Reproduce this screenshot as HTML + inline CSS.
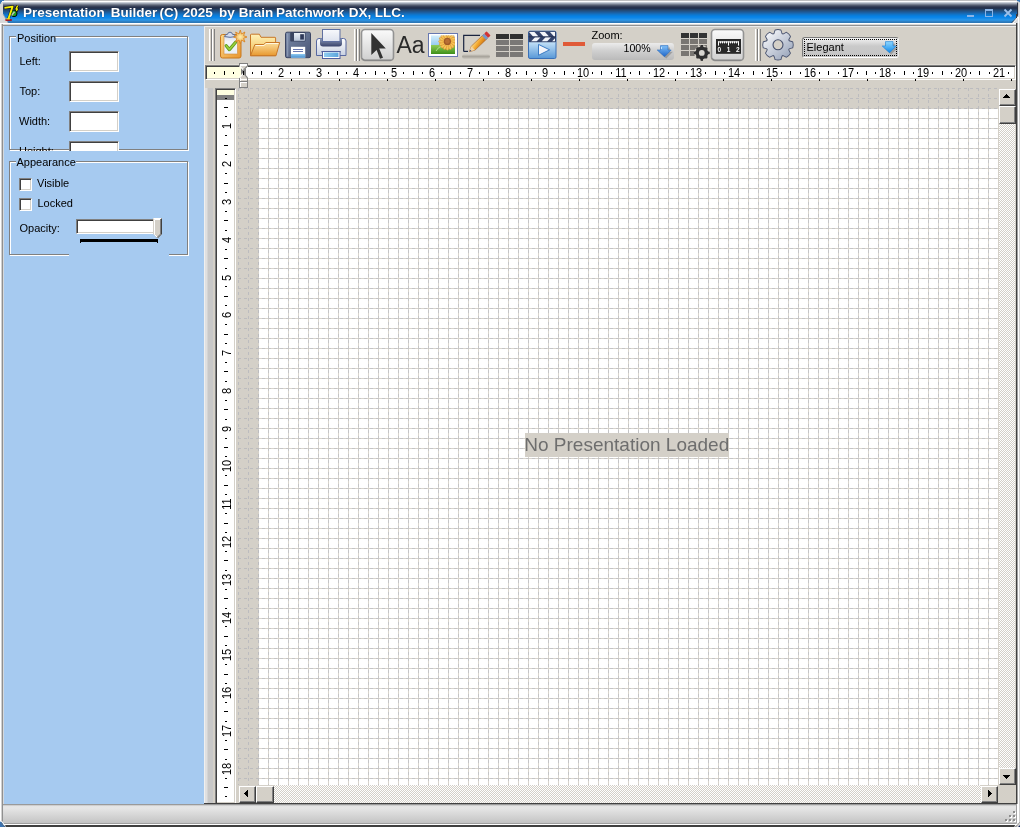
<!DOCTYPE html>
<html><head><meta charset="utf-8">
<style>
*{box-sizing:border-box}
html,body{margin:0;padding:0}
body{width:1020px;height:827px;overflow:hidden;position:relative;will-change:transform;background:#d4d0c8;font-family:"Liberation Sans",sans-serif;font-size:11px;color:#000}
.a{position:absolute}
#title{left:0;top:0;width:1020px;height:27px;background:linear-gradient(to bottom,#c0c0c0 0,#c0c0c0 1px,#fff 1px,#fff 2px,#e0e4e8 2px,#b0b8c4 3px,#8890a0 4px,#606878 5px,#404a60 6px,#2c3650 7px,#222e48 8px,#243858 9px,#244870 10px,#225080 11px,#1e5a98 12px,#1a64a8 13px,#1470c0 14px,#0c78d0 15px,#0880e0 16px,#0884e8 17px,#1088e8 18px,#2090e8 19px,#2898ec 20px,#3088d0 21px,#2c78b8 22px,#2c78b8 23px,#fff 23px,#fff 24px,#d8d8d8 24px,#d8d8d8 25px,#909090 25px,#909090 26px,#ececec 26px,#ececec 27px)}
.tw{position:absolute;top:4.6px;color:#fff;font-weight:bold;font-size:13.5px;white-space:nowrap;text-shadow:0 0 1px #102040}
#hrt i,#hmk i,#vrt i{position:absolute;background:#000;display:block}
.rn{position:absolute;top:66.1px;width:20px;text-align:center;font-size:12.5px;line-height:14px;transform:scaleX(.88)}
.vn{position:absolute;left:216.9px;width:20px;height:14px;margin-top:-7px;text-align:center;font-size:12.5px;line-height:14px;transform:rotate(-90deg) scaleX(.88)}
.lbl{position:absolute;font-size:11px;line-height:13px;white-space:nowrap}
.edit{position:absolute;width:50px;height:21px;background:#fff;border-style:solid;border-width:1px;border-color:#808080 #fff #fff #808080;box-shadow:inset 1px 1px 0 #404040,inset -1px -1px 0 #d4d0c8}
.gb{position:absolute;border:1px solid #808080;box-shadow:inset 1px 1px 0 #fff,1px 1px 0 #fff}
.chk{position:absolute;width:13px;height:13px;background:#fff;border-style:solid;border-width:1px;border-color:#808080 #fff #fff #808080;box-shadow:inset 1px 1px 0 #404040,inset -1px -1px 0 #d4d0c8}
.btn3d{position:absolute;background:#d4d0c8;border-style:solid;border-width:1px;border-color:#fff #404040 #404040 #fff;box-shadow:inset -1px -1px 0 #808080}
.track{position:absolute;background:#fff}

</style></head>
<body>
<div id="title" class="a"></div>
<span class="tw" style="left:23px">Presentation</span><span class="tw" style="left:110.7px">Builder</span><span class="tw" style="left:159.5px">(C)</span><span class="tw" style="left:182.8px">2025</span><span class="tw" style="left:219.1px">by</span><span class="tw" style="left:238.8px">Brain</span><span class="tw" style="left:276px">Patchwork</span><span class="tw" style="left:348.7px">DX,</span><span class="tw" style="left:374.7px">LLC.</span>

<!-- frames -->
<div class="a" style="left:0;top:24px;width:1px;height:803px;background:#fff"></div>
<div class="a" style="left:1px;top:24px;width:1px;height:803px;background:#d0d0d0"></div>
<div class="a" style="left:2px;top:24px;width:1px;height:803px;background:#909090"></div>
<div class="a" style="left:1016px;top:14px;width:1px;height:790px;background:#404040"></div>
<div class="a" style="left:1017px;top:14px;width:1px;height:790px;background:#a0a0a0"></div>
<div class="a" style="left:1016px;top:804px;width:1px;height:19px;background:#a0a0a0"></div>
<div class="a" style="left:1017px;top:804px;width:1px;height:19px;background:#fff"></div>
<div class="a" style="left:1018px;top:14px;width:1px;height:813px;background:#fff"></div>
<div class="a" style="left:1019px;top:14px;width:1px;height:813px;background:#d0d0d0"></div>

<!-- left blue panel -->
<div class="a" style="left:3px;top:26px;width:201px;height:778px;background:#a6caf0"></div>
<div class="a" style="left:204px;top:27px;width:1px;height:777px;background:#f0f0f0"></div>
<div class="a" style="left:3px;top:26px;width:1px;height:778px;background:#d4d8dc"></div>

<!-- toolbar bottom highlight -->
<div class="a" style="left:205px;top:64px;width:811px;height:1px;background:#e0dcd4"></div>

<!-- horizontal ruler -->
<div class="a" style="left:205px;top:65px;width:811px;height:15px;background:#fff;border-style:solid;border-width:1px;border-color:#808080 #fff #fff #808080;box-shadow:inset 1px 1px 0 #404040,inset -1px -1px 0 #d4d0c8"></div>
<div class="a" style="left:207px;top:67px;width:34px;height:11px;background:#ffffe1"></div>

<!-- left column beside vertical ruler -->
<div class="a" style="left:205px;top:88px;width:10px;height:715px;background:linear-gradient(to right,#e0e0e0 0,#e0e0e0 2px,#c8c8c8 3px,#c8c8c8 8px,#d4d0c8 8px)"></div>

<!-- vertical ruler -->
<div class="a" style="left:215px;top:88px;width:21px;height:716px;background:#fff;border-style:solid;border-width:1px;border-color:#808080 #fff #fff #808080;box-shadow:inset 1px 1px 0 #404040,inset -1px -1px 0 #d4d0c8"></div>
<div class="a" style="left:217px;top:90px;width:17px;height:5px;background:#ffffe1"></div>
<div class="a" style="left:217px;top:95px;width:17px;height:5px;background:#808080"></div>

<!-- grid viewport -->
<svg class="a" style="left:238px;top:88px" width="760" height="697" viewBox="0 0 760 697">
<defs>
<pattern id="gp" x="2" y="2" width="30" height="30" patternUnits="userSpaceOnUse">
<g fill="#d7d3cb">
<rect x="8" y="0" width="1" height="30"/><rect x="18" y="0" width="1" height="30"/><rect x="28" y="0" width="1" height="30"/>
<rect x="0" y="8" width="30" height="1"/><rect x="0" y="18" width="30" height="1"/><rect x="0" y="28" width="30" height="1"/>
</g>
<g fill="#c4c4c6">
<rect x="8" y="0" width="1" height="1"/><rect x="8" y="4" width="1" height="3"/><rect x="8" y="10" width="1" height="3"/><rect x="8" y="16" width="1" height="3"/><rect x="8" y="22" width="1" height="3"/><rect x="8" y="28" width="1" height="2"/>
<rect x="18" y="0" width="1" height="1"/><rect x="18" y="4" width="1" height="3"/><rect x="18" y="10" width="1" height="3"/><rect x="18" y="16" width="1" height="3"/><rect x="18" y="22" width="1" height="3"/><rect x="18" y="28" width="1" height="2"/>
<rect x="28" y="0" width="1" height="1"/><rect x="28" y="4" width="1" height="3"/><rect x="28" y="10" width="1" height="3"/><rect x="28" y="16" width="1" height="3"/><rect x="28" y="22" width="1" height="3"/><rect x="28" y="28" width="1" height="2"/>
<rect y="8" x="0" height="1" width="1"/><rect y="8" x="4" height="1" width="3"/><rect y="8" x="10" height="1" width="3"/><rect y="8" x="16" height="1" width="3"/><rect y="8" x="22" height="1" width="3"/><rect y="8" x="28" height="1" width="2"/>
<rect y="18" x="0" height="1" width="1"/><rect y="18" x="4" height="1" width="3"/><rect y="18" x="10" height="1" width="3"/><rect y="18" x="16" height="1" width="3"/><rect y="18" x="22" height="1" width="3"/><rect y="18" x="28" height="1" width="2"/>
<rect y="28" x="0" height="1" width="1"/><rect y="28" x="4" height="1" width="3"/><rect y="28" x="10" height="1" width="3"/><rect y="28" x="16" height="1" width="3"/><rect y="28" x="22" height="1" width="3"/><rect y="28" x="28" height="1" width="2"/>
</g>
</pattern>
<pattern id="gp2" x="2" y="2" width="30" height="30" patternUnits="userSpaceOnUse">
<g fill="#d4d0c8">
<rect x="8" y="0" width="1" height="30"/><rect x="18" y="0" width="1" height="30"/><rect x="28" y="0" width="1" height="30"/>
<rect x="0" y="8" width="30" height="1"/><rect x="0" y="18" width="30" height="1"/><rect x="0" y="28" width="30" height="1"/>
</g>
<g fill="#bcbcbf">
<rect x="8" y="0" width="1" height="1"/><rect x="8" y="4" width="1" height="3"/><rect x="8" y="10" width="1" height="3"/><rect x="8" y="16" width="1" height="3"/><rect x="8" y="22" width="1" height="3"/><rect x="8" y="28" width="1" height="2"/>
<rect x="18" y="0" width="1" height="1"/><rect x="18" y="4" width="1" height="3"/><rect x="18" y="10" width="1" height="3"/><rect x="18" y="16" width="1" height="3"/><rect x="18" y="22" width="1" height="3"/><rect x="18" y="28" width="1" height="2"/>
<rect x="28" y="0" width="1" height="1"/><rect x="28" y="4" width="1" height="3"/><rect x="28" y="10" width="1" height="3"/><rect x="28" y="16" width="1" height="3"/><rect x="28" y="22" width="1" height="3"/><rect x="28" y="28" width="1" height="2"/>
<rect y="8" x="0" height="1" width="1"/><rect y="8" x="4" height="1" width="3"/><rect y="8" x="10" height="1" width="3"/><rect y="8" x="16" height="1" width="3"/><rect y="8" x="22" height="1" width="3"/><rect y="8" x="28" height="1" width="2"/>
<rect y="18" x="0" height="1" width="1"/><rect y="18" x="4" height="1" width="3"/><rect y="18" x="10" height="1" width="3"/><rect y="18" x="16" height="1" width="3"/><rect y="18" x="22" height="1" width="3"/><rect y="18" x="28" height="1" width="2"/>
<rect y="28" x="0" height="1" width="1"/><rect y="28" x="4" height="1" width="3"/><rect y="28" x="10" height="1" width="3"/><rect y="28" x="16" height="1" width="3"/><rect y="28" x="22" height="1" width="3"/><rect y="28" x="28" height="1" width="2"/>
</g>
</pattern>
</defs>
<rect x="0" y="0" width="760" height="697" fill="#d4d0c8"/>
<rect x="0" y="0" width="760" height="697" fill="url(#gp2)"/>
<rect x="21" y="21" width="739" height="676" fill="#fff"/>
<rect x="21" y="21" width="739" height="676" fill="url(#gp)"/>
</svg>
<!-- ===== left panel content ===== -->
<div class="gb" style="left:9px;top:36px;width:179px;height:114px"></div>
<div class="a" style="left:16px;top:30px;width:39px;height:12px;background:#a6caf0"></div>
<div class="lbl" style="left:17px;top:31.7px">Position</div>
<div class="lbl" style="left:19.5px;top:54.5px">Left:</div>
<div class="edit" style="left:69px;top:51px"></div>
<div class="lbl" style="left:19.5px;top:84.5px">Top:</div>
<div class="edit" style="left:69px;top:81px"></div>
<div class="lbl" style="left:19px;top:114.5px">Width:</div>
<div class="edit" style="left:69px;top:111px"></div>
<div class="a" style="left:4px;top:130px;width:180px;height:21px;overflow:hidden">
  <div class="lbl" style="left:15px;top:14.5px">Height:</div>
  <div class="edit" style="left:65px;top:11px"></div>
</div>

<div class="gb" style="left:9px;top:161px;width:179px;height:94px"></div>
<div class="a" style="left:16px;top:155px;width:60px;height:12px;background:#a6caf0"></div>
<div class="lbl" style="left:16.5px;top:156px">Appearance</div>
<div class="chk" style="left:19px;top:178px"></div>
<div class="lbl" style="left:37px;top:176.8px">Visible</div>
<div class="chk" style="left:19px;top:198px"></div>
<div class="lbl" style="left:37.5px;top:197px">Locked</div>
<div class="lbl" style="left:19.5px;top:221.5px">Opacity:</div>
<div class="a" style="left:76px;top:219px;width:85px;height:15px;background:#fff;border-style:solid;border-width:1px;border-color:#808080 #fff #fff #808080;box-shadow:inset 1px 1px 0 #404040,inset -1px -1px 0 #d4d0c8"></div>
<svg class="a" style="left:153px;top:218px" width="9" height="20" viewBox="0 0 9 20">
<path d="M0 0H9V16L5 20H4L0 16Z" fill="#d4d0c8"/>
<path d="M0 0H8V1H1V16L4.5 19.5" fill="none" stroke="#fff" stroke-width="1" transform="translate(0.5 0.5)"/>
<path d="M8.5 0.5V16L4.5 20" fill="none" stroke="#404040" stroke-width="1"/>
<path d="M7.5 1V16L4 19.5" fill="none" stroke="#808080" stroke-width="1"/>
</svg>
<div class="a" style="left:80px;top:239px;width:78px;height:3px;background:#000"></div>
<div class="a" style="left:80px;top:242px;width:1px;height:1px;background:#000"></div>
<div class="a" style="left:157px;top:242px;width:1px;height:1px;background:#000"></div>
<div class="a" style="left:69px;top:253px;width:100px;height:3px;background:#a6caf0"></div>
<div id="hrt"><i style="left:214px;top:72px;width:1px;height:2px"></i><i style="left:224px;top:71px;width:1px;height:4px"></i><i style="left:233px;top:72px;width:1px;height:2px"></i><span class="rn" style="left:233.1px">1</span><i style="left:252px;top:72px;width:1px;height:2px"></i><i style="left:261px;top:71px;width:1px;height:4px"></i><i style="left:271px;top:72px;width:1px;height:2px"></i><span class="rn" style="left:270.9px">2</span><i style="left:290px;top:72px;width:1px;height:2px"></i><i style="left:299px;top:71px;width:1px;height:4px"></i><i style="left:309px;top:72px;width:1px;height:2px"></i><span class="rn" style="left:308.6px">3</span><i style="left:328px;top:72px;width:1px;height:2px"></i><i style="left:337px;top:71px;width:1px;height:4px"></i><i style="left:346px;top:72px;width:1px;height:2px"></i><span class="rn" style="left:346.4px">4</span><i style="left:365px;top:72px;width:1px;height:2px"></i><i style="left:375px;top:71px;width:1px;height:4px"></i><i style="left:384px;top:72px;width:1px;height:2px"></i><span class="rn" style="left:384.2px">5</span><i style="left:403px;top:72px;width:1px;height:2px"></i><i style="left:413px;top:71px;width:1px;height:4px"></i><i style="left:422px;top:72px;width:1px;height:2px"></i><span class="rn" style="left:422.0px">6</span><i style="left:441px;top:72px;width:1px;height:2px"></i><i style="left:450px;top:71px;width:1px;height:4px"></i><i style="left:460px;top:72px;width:1px;height:2px"></i><span class="rn" style="left:459.8px">7</span><i style="left:479px;top:72px;width:1px;height:2px"></i><i style="left:488px;top:71px;width:1px;height:4px"></i><i style="left:498px;top:72px;width:1px;height:2px"></i><span class="rn" style="left:497.5px">8</span><i style="left:516px;top:72px;width:1px;height:2px"></i><i style="left:526px;top:71px;width:1px;height:4px"></i><i style="left:535px;top:72px;width:1px;height:2px"></i><span class="rn" style="left:535.3px">9</span><i style="left:554px;top:72px;width:1px;height:2px"></i><i style="left:564px;top:71px;width:1px;height:4px"></i><i style="left:573px;top:72px;width:1px;height:2px"></i><span class="rn" style="left:573.1px">10</span><i style="left:592px;top:72px;width:1px;height:2px"></i><i style="left:601px;top:71px;width:1px;height:4px"></i><i style="left:611px;top:72px;width:1px;height:2px"></i><span class="rn" style="left:610.9px">11</span><i style="left:630px;top:72px;width:1px;height:2px"></i><i style="left:639px;top:71px;width:1px;height:4px"></i><i style="left:649px;top:72px;width:1px;height:2px"></i><span class="rn" style="left:648.7px">12</span><i style="left:668px;top:72px;width:1px;height:2px"></i><i style="left:677px;top:71px;width:1px;height:4px"></i><i style="left:686px;top:72px;width:1px;height:2px"></i><span class="rn" style="left:686.4px">13</span><i style="left:705px;top:72px;width:1px;height:2px"></i><i style="left:715px;top:71px;width:1px;height:4px"></i><i style="left:724px;top:72px;width:1px;height:2px"></i><span class="rn" style="left:724.2px">14</span><i style="left:743px;top:72px;width:1px;height:2px"></i><i style="left:753px;top:71px;width:1px;height:4px"></i><i style="left:762px;top:72px;width:1px;height:2px"></i><span class="rn" style="left:762.0px">15</span><i style="left:781px;top:72px;width:1px;height:2px"></i><i style="left:790px;top:71px;width:1px;height:4px"></i><i style="left:800px;top:72px;width:1px;height:2px"></i><span class="rn" style="left:799.8px">16</span><i style="left:819px;top:72px;width:1px;height:2px"></i><i style="left:828px;top:71px;width:1px;height:4px"></i><i style="left:838px;top:72px;width:1px;height:2px"></i><span class="rn" style="left:837.6px">17</span><i style="left:857px;top:72px;width:1px;height:2px"></i><i style="left:866px;top:71px;width:1px;height:4px"></i><i style="left:875px;top:72px;width:1px;height:2px"></i><span class="rn" style="left:875.3px">18</span><i style="left:894px;top:72px;width:1px;height:2px"></i><i style="left:904px;top:71px;width:1px;height:4px"></i><i style="left:913px;top:72px;width:1px;height:2px"></i><span class="rn" style="left:913.1px">19</span><i style="left:932px;top:72px;width:1px;height:2px"></i><i style="left:942px;top:71px;width:1px;height:4px"></i><i style="left:951px;top:72px;width:1px;height:2px"></i><span class="rn" style="left:950.9px">20</span><i style="left:970px;top:72px;width:1px;height:2px"></i><i style="left:979px;top:71px;width:1px;height:4px"></i><i style="left:989px;top:72px;width:1px;height:2px"></i><span class="rn" style="left:988.7px">21</span><i style="left:1008px;top:72px;width:1px;height:2px"></i></div>
<div id="hmk"><i style="left:291px;top:79px;width:1px;height:2px"></i><i style="left:339px;top:79px;width:1px;height:2px"></i><i style="left:387px;top:79px;width:1px;height:2px"></i><i style="left:435px;top:79px;width:1px;height:2px"></i><i style="left:483px;top:79px;width:1px;height:2px"></i><i style="left:531px;top:79px;width:1px;height:2px"></i><i style="left:579px;top:79px;width:1px;height:2px"></i><i style="left:627px;top:79px;width:1px;height:2px"></i><i style="left:675px;top:79px;width:1px;height:2px"></i><i style="left:723px;top:79px;width:1px;height:2px"></i><i style="left:771px;top:79px;width:1px;height:2px"></i><i style="left:819px;top:79px;width:1px;height:2px"></i><i style="left:867px;top:79px;width:1px;height:2px"></i><i style="left:915px;top:79px;width:1px;height:2px"></i><i style="left:963px;top:79px;width:1px;height:2px"></i><i style="left:1011px;top:79px;width:1px;height:2px"></i></div>
<div id="vrt"><i style="left:225px;top:98px;width:2px;height:1px"></i><i style="left:224px;top:107px;width:4px;height:1px"></i><i style="left:225px;top:116px;width:2px;height:1px"></i><span class="vn" style="top:126.4px">1</span><i style="left:225px;top:135px;width:2px;height:1px"></i><i style="left:224px;top:145px;width:4px;height:1px"></i><i style="left:225px;top:154px;width:2px;height:1px"></i><span class="vn" style="top:164.2px">2</span><i style="left:225px;top:173px;width:2px;height:1px"></i><i style="left:224px;top:183px;width:4px;height:1px"></i><i style="left:225px;top:192px;width:2px;height:1px"></i><span class="vn" style="top:201.9px">3</span><i style="left:225px;top:211px;width:2px;height:1px"></i><i style="left:224px;top:220px;width:4px;height:1px"></i><i style="left:225px;top:230px;width:2px;height:1px"></i><span class="vn" style="top:239.7px">4</span><i style="left:225px;top:249px;width:2px;height:1px"></i><i style="left:224px;top:258px;width:4px;height:1px"></i><i style="left:225px;top:268px;width:2px;height:1px"></i><span class="vn" style="top:277.5px">5</span><i style="left:225px;top:286px;width:2px;height:1px"></i><i style="left:224px;top:296px;width:4px;height:1px"></i><i style="left:225px;top:305px;width:2px;height:1px"></i><span class="vn" style="top:315.3px">6</span><i style="left:225px;top:324px;width:2px;height:1px"></i><i style="left:224px;top:334px;width:4px;height:1px"></i><i style="left:225px;top:343px;width:2px;height:1px"></i><span class="vn" style="top:353.1px">7</span><i style="left:225px;top:362px;width:2px;height:1px"></i><i style="left:224px;top:371px;width:4px;height:1px"></i><i style="left:225px;top:381px;width:2px;height:1px"></i><span class="vn" style="top:390.8px">8</span><i style="left:225px;top:400px;width:2px;height:1px"></i><i style="left:224px;top:409px;width:4px;height:1px"></i><i style="left:225px;top:419px;width:2px;height:1px"></i><span class="vn" style="top:428.6px">9</span><i style="left:225px;top:438px;width:2px;height:1px"></i><i style="left:224px;top:447px;width:4px;height:1px"></i><i style="left:225px;top:456px;width:2px;height:1px"></i><span class="vn" style="top:466.4px">10</span><i style="left:225px;top:475px;width:2px;height:1px"></i><i style="left:224px;top:485px;width:4px;height:1px"></i><i style="left:225px;top:494px;width:2px;height:1px"></i><span class="vn" style="top:504.2px">11</span><i style="left:225px;top:513px;width:2px;height:1px"></i><i style="left:224px;top:523px;width:4px;height:1px"></i><i style="left:225px;top:532px;width:2px;height:1px"></i><span class="vn" style="top:542.0px">12</span><i style="left:225px;top:551px;width:2px;height:1px"></i><i style="left:224px;top:560px;width:4px;height:1px"></i><i style="left:225px;top:570px;width:2px;height:1px"></i><span class="vn" style="top:579.7px">13</span><i style="left:225px;top:589px;width:2px;height:1px"></i><i style="left:224px;top:598px;width:4px;height:1px"></i><i style="left:225px;top:608px;width:2px;height:1px"></i><span class="vn" style="top:617.5px">14</span><i style="left:225px;top:626px;width:2px;height:1px"></i><i style="left:224px;top:636px;width:4px;height:1px"></i><i style="left:225px;top:645px;width:2px;height:1px"></i><span class="vn" style="top:655.3px">15</span><i style="left:225px;top:664px;width:2px;height:1px"></i><i style="left:224px;top:674px;width:4px;height:1px"></i><i style="left:225px;top:683px;width:2px;height:1px"></i><span class="vn" style="top:693.1px">16</span><i style="left:225px;top:702px;width:2px;height:1px"></i><i style="left:224px;top:711px;width:4px;height:1px"></i><i style="left:225px;top:721px;width:2px;height:1px"></i><span class="vn" style="top:730.9px">17</span><i style="left:225px;top:740px;width:2px;height:1px"></i><i style="left:224px;top:749px;width:4px;height:1px"></i><i style="left:225px;top:759px;width:2px;height:1px"></i><span class="vn" style="top:768.6px">18</span><i style="left:225px;top:778px;width:2px;height:1px"></i><i style="left:224px;top:787px;width:4px;height:1px"></i><i style="left:225px;top:796px;width:2px;height:1px"></i></div>
<svg width="0" height="0" style="position:absolute"><defs><pattern id="ckp" x="0" y="0" width="2" height="2" patternUnits="userSpaceOnUse"><rect width="2" height="2" fill="#fff"/><rect x="0" y="0" width="1" height="1" fill="#d4d0c8"/><rect x="1" y="1" width="1" height="1" fill="#d4d0c8"/></pattern></defs></svg>
<!-- vertical scrollbar -->
<div class="btn3d" style="left:999px;top:89px;width:17px;height:17px"></div>
<svg class="a" style="left:1003px;top:94px" width="7" height="4"><path d="M3 0h1v1h1v1h1v1h1v1H0V3h1V2h1V1h1z" fill="#000"/></svg>
<div class="btn3d" style="left:999px;top:106px;width:17px;height:18px"></div>
<svg class="a" style="left:999px;top:124px" width="16" height="644"><rect width="16" height="644" fill="url(#ckp)"/></svg>
<div class="btn3d" style="left:999px;top:768px;width:17px;height:17px"></div>
<svg class="a" style="left:1003px;top:775px" width="7" height="4"><path d="M0 0h7v1H6v1H5v1H4v1H3V3H2V2H1V1H0z" fill="#000"/></svg>
<!-- horizontal scrollbar -->
<div class="btn3d" style="left:239px;top:786px;width:17px;height:17px"></div>
<svg class="a" style="left:244px;top:790px" width="4" height="7"><path d="M3 0h1v7H3V6H2V5H1V4H0V3h1V2h1V1h1z" fill="#000"/></svg>
<div class="btn3d" style="left:256px;top:786px;width:18px;height:17px"></div>
<svg class="a" style="left:274px;top:785px" width="707" height="18"><rect width="707" height="18" fill="url(#ckp)"/></svg>
<div class="btn3d" style="left:981px;top:786px;width:17px;height:17px"></div>
<svg class="a" style="left:988px;top:790px" width="4" height="7"><path d="M0 0h1v1h1v1h1v1h1v1H3v1H2v1H1v1H0z" fill="#000"/></svg>
<div class="a" style="left:998px;top:785px;width:18px;height:18px;background:#d4d0c8"></div>

<!-- status bar -->
<div class="a" style="left:204px;top:803px;width:812px;height:1px;background:#404040"></div>
<div class="a" style="left:3px;top:804px;width:1013px;height:19px;background:linear-gradient(#9a9a9a 0,#9a9a9a 1px,#cfcfcf 1px,#cfcfcf 2px,#e4e4e4 2px,#e6e6e6 4px,#c4c4c4 19px)"></div>
<div class="a" style="left:0;top:823px;width:1020px;height:1px;background:#a0a0a0"></div>
<div class="a" style="left:0;top:824px;width:1020px;height:1px;background:#fff"></div>
<div class="a" style="left:0;top:825px;width:1020px;height:2px;background:#404040"></div>

<!-- no presentation label -->
<div class="a" style="left:525px;top:433px;width:204px;height:24px;background:#d4d0c8"></div>
<div class="a" style="left:524.3px;top:434.2px;font-size:19px;line-height:22px;color:#6e6e6e;white-space:nowrap">No Presentation Loaded</div>
<!-- ===== toolbar ===== -->
<!-- grips -->
<div class="a" style="left:209px;top:29px;width:1px;height:32px;background:#fff"></div>
<div class="a" style="left:211px;top:29px;width:1px;height:32px;background:#808080"></div>
<div class="a" style="left:212px;top:29px;width:1px;height:32px;background:#fff"></div>
<div class="a" style="left:214px;top:29px;width:1px;height:32px;background:#808080"></div>
<div class="a" style="left:354px;top:29px;width:1px;height:32px;background:#fff"></div>
<div class="a" style="left:356px;top:29px;width:1px;height:32px;background:#808080"></div>
<div class="a" style="left:357px;top:29px;width:1px;height:32px;background:#fff"></div>
<div class="a" style="left:359px;top:29px;width:1px;height:32px;background:#808080"></div>
<div class="a" style="left:755px;top:29px;width:1px;height:32px;background:#fff"></div>
<div class="a" style="left:757px;top:29px;width:1px;height:32px;background:#808080"></div>
<div class="a" style="left:758px;top:29px;width:1px;height:32px;background:#fff"></div>
<div class="a" style="left:760px;top:29px;width:1px;height:32px;background:#808080"></div>

<!-- new presentation icon -->
<svg class="a" style="left:216px;top:26px" width="34" height="34" viewBox="0 0 34 34">
<defs>
<linearGradient id="gOr" x1="0" y1="0" x2="1" y2="1"><stop offset="0" stop-color="#fcd88a"/><stop offset="1" stop-color="#e8952e"/></linearGradient>
<linearGradient id="gPap" x1="0" y1="0" x2="0" y2="1"><stop offset="0" stop-color="#d8e0ec"/><stop offset="0.3" stop-color="#f4f6fa"/><stop offset="1" stop-color="#e8eef6"/></linearGradient>
<radialGradient id="gStar" cx="0.5" cy="0.5" r="0.5"><stop offset="0" stop-color="#fff0b0"/><stop offset="1" stop-color="#eaa040"/></radialGradient>
</defs>
<rect x="4.5" y="8.5" width="20.5" height="23.5" rx="2" fill="url(#gOr)" stroke="#c8781e" stroke-width="1"/>
<rect x="8" y="10.5" width="13.5" height="17.5" fill="url(#gPap)" stroke="#d08a3a" stroke-width="0.6"/>
<path d="M8.6 10.6 Q8.6 8.4 11.6 8.2 Q11.8 6.2 14 6.2 Q16.2 6.2 16.4 8.2 Q19.4 8.4 19.4 10.6 Q14 12 8.6 10.6Z" fill="#d4dcec" stroke="#5a6e9a" stroke-width="1"/>
<path d="M10.2 19.8 L13.4 23.6 L19.6 16.2" fill="none" stroke="#5a9a18" stroke-width="3.2" stroke-linejoin="round" stroke-linecap="round"/>
<path d="M10.2 19.8 L13.4 23.6 L19.6 16.2" fill="none" stroke="#9ad040" stroke-width="1.6" stroke-linejoin="round" stroke-linecap="round"/>
<path d="M24.3 4 L25.5 8 L28.9 6 L27.6 9.6 L31 11 L27.6 12.3 L28.9 16 L25.5 14 L24.3 17.8 L23 14 L19.6 16 L20.9 12.3 L17.5 11 L20.9 9.6 L19.6 6 L23 8Z" fill="url(#gStar)" stroke="#d8821e" stroke-width="0.8"/>
</svg>

<!-- folder icon -->
<svg class="a" style="left:246px;top:28px" width="36" height="32" viewBox="0 0 36 32">
<defs>
<linearGradient id="gFb" x1="0" y1="0" x2="0" y2="1"><stop offset="0" stop-color="#fff2b8"/><stop offset="1" stop-color="#f0b850"/></linearGradient>
<linearGradient id="gFf" x1="0" y1="0" x2="0" y2="1"><stop offset="0" stop-color="#fbe0a0"/><stop offset="1" stop-color="#e8982e"/></linearGradient>
</defs>
<path d="M4.5 27.7 V7 Q4.5 6.2 5.3 6.2 H13.4 L15 9.3 H29 Q29.6 9.3 29.6 10 V27.7Z" fill="url(#gFb)" stroke="#c87828" stroke-width="1"/>
<path d="M4.5 27.7 L8.9 16.5 H17.8 L19.7 14.5 H33.7 L30 27.7Z" fill="url(#gFf)" stroke="#c87828" stroke-width="1" stroke-linejoin="round"/>
<path d="M9.6 17.5 H18.2 L20.1 15.5 H32.4" fill="none" stroke="#fff8e0" stroke-width="1"/>
</svg>
<!-- floppy -->
<svg class="a" style="left:282px;top:28px" width="32" height="32" viewBox="0 0 32 32">
<defs>
<linearGradient id="gFl" x1="0" y1="0" x2="1" y2="1"><stop offset="0" stop-color="#7a8aa8"/><stop offset="1" stop-color="#485474"/></linearGradient>
<linearGradient id="gSh" x1="0" y1="0" x2="0" y2="1"><stop offset="0" stop-color="#eef2f8"/><stop offset="1" stop-color="#b8c4d8"/></linearGradient>
<linearGradient id="gLb" x1="0" y1="0" x2="0" y2="1"><stop offset="0" stop-color="#8cc8f0"/><stop offset="1" stop-color="#4a90d0"/></linearGradient>
</defs>
<rect x="3.5" y="4.2" width="25" height="25.5" rx="1.5" fill="url(#gFl)" stroke="#3c4664" stroke-width="1"/>
<rect x="4.8" y="5.5" width="1.5" height="23" fill="#98a6c0" opacity="0.7"/>
<rect x="8.2" y="4" width="15.3" height="9.6" rx="1" fill="#3a4460"/>
<rect x="12" y="5" width="10.8" height="7.8" fill="url(#gSh)"/>
<rect x="18.2" y="6.2" width="3.7" height="5.4" fill="#2e3858"/>
<rect x="9" y="18.8" width="14.2" height="11" fill="#fff"/>
<rect x="9" y="26" width="14.2" height="3.8" fill="url(#gLb)"/>
<rect x="11" y="21" width="10" height="1" fill="#6878b0"/>
<rect x="11" y="23" width="10" height="1" fill="#6878b0"/>
</svg>

<!-- printer -->
<svg class="a" style="left:312px;top:26px" width="38" height="36" viewBox="0 0 38 36">
<defs>
<linearGradient id="gPb" x1="0" y1="0" x2="0" y2="1"><stop offset="0" stop-color="#ffffff"/><stop offset="1" stop-color="#c8d0e0"/></linearGradient>
<linearGradient id="gPd" x1="0" y1="0" x2="0" y2="1"><stop offset="0" stop-color="#8c9ab8"/><stop offset="1" stop-color="#38426a"/></linearGradient>
<linearGradient id="gPp" x1="0" y1="0" x2="0" y2="1"><stop offset="0" stop-color="#f8f9fc"/><stop offset="1" stop-color="#dde2ee"/></linearGradient>
<linearGradient id="gPt" x1="0" y1="0" x2="1" y2="0"><stop offset="0" stop-color="#90ccf0"/><stop offset="1" stop-color="#5aa4dc"/></linearGradient>
</defs>
<path d="M4.5 29.5 V15 Q4.5 12.5 7 12.5 H31.5 Q34 12.5 34 15 V29.5Z" fill="url(#gPb)" stroke="#5868a0" stroke-width="1"/>
<path d="M8 12.5 H30 V17.5 Q30 20.5 27 20.5 H11 Q8 20.5 8 17.5Z" fill="url(#gPd)"/>
<rect x="10.5" y="3.5" width="17.5" height="12" fill="url(#gPp)" stroke="#6070a0" stroke-width="1"/>
<rect x="9.5" y="25" width="19" height="1.4" fill="#3e4a78"/>
<rect x="10.5" y="25.5" width="17.5" height="7" fill="#fff" stroke="#5060a0" stroke-width="1"/>
<rect x="12" y="26.5" width="14.5" height="4.5" fill="url(#gPt)"/>
</svg>
<!-- arrow button (pressed) -->
<svg class="a" style="left:358px;top:26px" width="40" height="38" viewBox="0 0 40 38">
<defs>
<linearGradient id="gBt" x1="0" y1="0" x2="0" y2="1"><stop offset="0" stop-color="#fbfbfb"/><stop offset="1" stop-color="#cfcfcf"/></linearGradient>
</defs>
<rect x="3.5" y="3.5" width="32" height="31" rx="3.5" fill="url(#gBt)" stroke="#939393" stroke-width="1.6"/>
<path d="M4.6 32 Q4.6 34 7 34 H32.8" fill="none" stroke="#6e6e6e" stroke-width="0.8" opacity="0.7"/>
<path d="M13.3 7.1 V28.9 L18.6 23.9 L22 32.8 L25 31.7 L21.2 22.5 H27.8Z" fill="#333"/>
</svg>
<div class="a" style="left:396.5px;top:32px;font-size:23px;line-height:26px;color:#2a2a2a;white-space:nowrap">Aa</div>

<!-- image icon -->
<svg class="a" style="left:426px;top:30px" width="34" height="30" viewBox="0 0 34 30">
<defs>
<linearGradient id="gSky" x1="0" y1="0" x2="0" y2="1"><stop offset="0" stop-color="#d4eefc"/><stop offset="1" stop-color="#98ccf0"/></linearGradient>
<linearGradient id="gGr" x1="0" y1="0" x2="0" y2="1"><stop offset="0" stop-color="#90cc58"/><stop offset="1" stop-color="#3e9018"/></linearGradient>
<radialGradient id="gPet" cx="0.5" cy="0.5" r="0.5"><stop offset="0.35" stop-color="#f8c050"/><stop offset="1" stop-color="#f0a838"/></radialGradient>
</defs>
<rect x="2.5" y="3.5" width="29" height="23" fill="#fff" stroke="#6878b0" stroke-width="1"/>
<rect x="5" y="5.4" width="24" height="9.6" fill="url(#gSky)"/>
<rect x="5" y="15" width="24" height="9" fill="url(#gGr)"/>
<path d="M10 21 Q12 17 16 16" fill="none" stroke="#c0e8a0" stroke-width="0.8"/>
<clipPath id="cpic"><rect x="5" y="5.4" width="24" height="18.6"/></clipPath>
<g clip-path="url(#cpic)"><g transform="translate(21.4 11.4)">
<g fill="#f6c458" stroke="#d88a28" stroke-width="0.5"><ellipse cx="0" cy="-5.6" rx="1.5" ry="3.2" transform="rotate(0.0)"/><ellipse cx="0" cy="-5.6" rx="1.5" ry="3.2" transform="rotate(22.5)"/><ellipse cx="0" cy="-5.6" rx="1.5" ry="3.2" transform="rotate(45.0)"/><ellipse cx="0" cy="-5.6" rx="1.5" ry="3.2" transform="rotate(67.5)"/><ellipse cx="0" cy="-5.6" rx="1.5" ry="3.2" transform="rotate(90.0)"/><ellipse cx="0" cy="-5.6" rx="1.5" ry="3.2" transform="rotate(112.5)"/><ellipse cx="0" cy="-5.6" rx="1.5" ry="3.2" transform="rotate(135.0)"/><ellipse cx="0" cy="-5.6" rx="1.5" ry="3.2" transform="rotate(157.5)"/><ellipse cx="0" cy="-5.6" rx="1.5" ry="3.2" transform="rotate(180.0)"/><ellipse cx="0" cy="-5.6" rx="1.5" ry="3.2" transform="rotate(202.5)"/><ellipse cx="0" cy="-5.6" rx="1.5" ry="3.2" transform="rotate(225.0)"/><ellipse cx="0" cy="-5.6" rx="1.5" ry="3.2" transform="rotate(247.5)"/><ellipse cx="0" cy="-5.6" rx="1.5" ry="3.2" transform="rotate(270.0)"/><ellipse cx="0" cy="-5.6" rx="1.5" ry="3.2" transform="rotate(292.5)"/><ellipse cx="0" cy="-5.6" rx="1.5" ry="3.2" transform="rotate(315.0)"/><ellipse cx="0" cy="-5.6" rx="1.5" ry="3.2" transform="rotate(337.5)"/></g>
<circle r="3.6" fill="#a05a28"/>
<circle r="2.4" fill="#b86e34"/>
</g></g>
</svg>

<!-- draw rect / pencil icon -->
<svg class="a" style="left:460px;top:28px" width="34" height="34" viewBox="0 0 34 34">
<defs>
<linearGradient id="gSb" x1="0" y1="0" x2="0" y2="1"><stop offset="0" stop-color="#cdc9c1"/><stop offset="0.5" stop-color="#a9a59d"/><stop offset="1" stop-color="#c4c0b8"/></linearGradient>
<linearGradient id="gPen" x1="0" y1="0" x2="1" y2="1"><stop offset="0" stop-color="#fce8a0"/><stop offset="0.5" stop-color="#f4a830"/><stop offset="1" stop-color="#c87010"/></linearGradient>
</defs>
<rect x="2" y="26.2" width="28" height="4.6" rx="2.3" fill="url(#gSb)"/>
<path d="M3.7 23.4 V7.4 H20" fill="none" stroke="#1a2440" stroke-width="1.2"/>
<path d="M3.7 23.4 H8" fill="none" stroke="#1a2440" stroke-width="1.2"/>
<g transform="translate(9.5 23.6) rotate(-43.5)">
<path d="M0 0 L5 -2.7 H22 V2.7 H5Z" fill="url(#gPen)" stroke="#a86020" stroke-width="0.6"/>
<path d="M0 0 L5 -2.7 V2.7Z" fill="#f0d4a8"/>
<path d="M0 0 L1.8 -1 V1Z" fill="#3a4a7a"/>
<rect x="20" y="-2.9" width="3" height="5.8" fill="#7898c8"/>
<rect x="23" y="-2.9" width="3.4" height="5.8" rx="0.8" fill="#d03434"/>
</g>
</svg>
<!-- table icon -->
<svg class="a" style="left:494px;top:32px" width="32" height="28" viewBox="0 0 32 28">
<rect x="2" y="2" width="13" height="5" fill="#303030"/><rect x="16" y="2" width="13" height="5" fill="#303030"/>
<rect x="2" y="8" width="13" height="5" fill="#7a7876"/><rect x="16" y="8" width="13" height="5" fill="#7a7876"/>
<rect x="2" y="14" width="13" height="5" fill="#7a7876"/><rect x="16" y="14" width="13" height="5" fill="#7a7876"/>
<rect x="2" y="20" width="13" height="5" fill="#7a7876"/><rect x="16" y="20" width="13" height="5" fill="#7a7876"/>
</svg>

<!-- clapperboard -->
<svg class="a" style="left:524px;top:28px" width="36" height="34" viewBox="0 0 36 34">
<defs>
<linearGradient id="gCl" gradientUnits="userSpaceOnUse" x1="0" y1="14" x2="0" y2="30"><stop offset="0" stop-color="#c4e2f8"/><stop offset="1" stop-color="#5a9ad8"/></linearGradient>
<clipPath id="cb1"><rect x="5" y="4" width="26" height="4.6"/></clipPath>
<clipPath id="cb2"><rect x="5" y="9.2" width="26" height="4.4"/></clipPath>
</defs>
<rect x="4.5" y="3.2" width="27.5" height="27.3" rx="1.5" fill="url(#gCl)" stroke="#3a70b8" stroke-width="1"/>
<rect x="4.5" y="3.2" width="27.5" height="11" rx="1" fill="#34446c"/><rect x="4.5" y="8.6" width="27.5" height="0.6" fill="#1a2440"/>
<g clip-path="url(#cb1)" fill="#f4f6fa">
<path d="M5 4H10.5L14.5 8.6H9Z"/><path d="M15.5 4H21L25 8.6H19.5Z"/><path d="M26 4H31.5L35.5 8.6H30Z"/>
</g>
<g clip-path="url(#cb2)" fill="#f4f6fa">
<path d="M7 13.6H12.5L16.5 9.2H11Z"/><path d="M17.5 13.6H23L27 9.2H21.5Z"/><path d="M28 13.6H33.5L37.5 9.2H32Z"/>
</g>
<path d="M14.5 16.4 V27.3 L25.6 21.8Z" fill="#f2f4fa" stroke="#3c7cc4" stroke-width="1" stroke-linejoin="round"/>
</svg>

<!-- red line -->
<div class="a" style="left:563px;top:42px;width:22px;height:4px;background:#e05a38"></div>

<!-- zoom combo -->
<div class="lbl" style="left:591.5px;top:29.3px">Zoom:</div>
<div class="a" style="left:592px;top:43px;width:82px;height:17px;border-radius:3px;background:linear-gradient(#ececec,#d0d0d0 45%,#bababa)"></div>
<div class="lbl" style="left:623.5px;top:41.8px;font-size:10.6px">100%</div>
<svg class="a" style="left:655px;top:44px" width="20" height="16" viewBox="0 0 20 16">
<defs><linearGradient id="gAr" x1="0" y1="0" x2="0" y2="1"><stop offset="0" stop-color="#80c0f8"/><stop offset="1" stop-color="#1c64c8"/></linearGradient></defs>
<path d="M6.5 2.5 H14 V6.8 H17 L10.2 13.6 L3 6.8 H6.5Z" fill="#505050" opacity="0.35" transform="translate(1 1)"/>
<path d="M5.5 1.6 H13 V6 H16.2 L9.5 12.8 L2.2 6 H5.5Z" fill="url(#gAr)" stroke="#2a6cc0" stroke-width="0.6"/>
<path d="M6.5 3 V5" stroke="#d8f0ff" stroke-width="0.8"/>
</svg>
<!-- grid settings icon -->
<svg class="a" style="left:678px;top:28px" width="34" height="34" viewBox="0 0 34 34">
<g fill="#333"><rect x="3" y="5" width="8" height="5"/><rect x="12" y="5" width="8" height="5"/><rect x="21" y="5" width="8" height="5"/></g>
<g fill="#797672">
<rect x="3" y="11" width="8" height="5"/><rect x="12" y="11" width="8" height="5"/><rect x="21" y="11" width="8" height="5"/>
<rect x="3" y="17" width="8" height="5"/><rect x="12" y="17" width="8" height="5"/><rect x="21" y="17" width="8" height="5"/>
<rect x="3" y="23" width="8" height="5"/><rect x="12" y="23" width="8" height="5"/>
</g>
<g transform="translate(23.8 24.9)">
<circle r="7.6" fill="#d4d0c8"/>
<g fill="#303030">
<rect x="-5.6" y="-5.6" width="11.2" height="11.2" rx="1"/>
<rect x="-5.6" y="-5.6" width="11.2" height="11.2" rx="1" transform="rotate(45)"/>
<rect x="-1.2" y="-7.9" width="2.4" height="15.8"/>
<rect x="-7.9" y="-1.2" width="15.8" height="2.4"/>
</g>
<circle r="2.9" fill="#d8d6d0"/>
</g>
</svg>

<!-- ruler button (pressed) -->
<svg class="a" style="left:708px;top:26px" width="40" height="38" viewBox="0 0 40 38">
<rect x="3.5" y="3.5" width="32" height="31" rx="3.5" fill="url(#gBt)" stroke="#939393" stroke-width="1.6"/>
<path d="M4.6 32 Q4.6 34 7 34 H32.8" fill="none" stroke="#6e6e6e" stroke-width="0.8" opacity="0.7"/>
<rect x="8" y="13" width="25" height="14.8" fill="#282828"/>
<g fill="#fff">
<rect x="10" y="15.4" width="21" height="1"/>
<rect x="10" y="15.4" width="1" height="4.2"/><rect x="20" y="15.4" width="1" height="4.2"/><rect x="30" y="15.4" width="1" height="4.2"/>
<rect x="12" y="15.4" width="1" height="2"/><rect x="14" y="15.4" width="1" height="2"/><rect x="16" y="15.4" width="1" height="2"/><rect x="18" y="15.4" width="1" height="2"/>
<rect x="22" y="15.4" width="1" height="2"/><rect x="24" y="15.4" width="1" height="2"/><rect x="26" y="15.4" width="1" height="2"/><rect x="28" y="15.4" width="1" height="2"/>
</g>
<text x="11.3" y="26" font-family="Liberation Sans" font-size="6.5" font-weight="bold" fill="#fff" text-anchor="middle">0</text>
<text x="20.5" y="26" font-family="Liberation Sans" font-size="6.5" font-weight="bold" fill="#fff" text-anchor="middle">1</text>
<text x="29.8" y="26" font-family="Liberation Sans" font-size="6.5" font-weight="bold" fill="#fff" text-anchor="middle">2</text>
</svg>

<!-- gear -->
<svg class="a" style="left:758px;top:26px" width="40" height="38" viewBox="0 0 40 38">
<defs>
<linearGradient id="gGe" gradientUnits="userSpaceOnUse" x1="8" y1="6" x2="32" y2="32"><stop offset="0" stop-color="#f8f9fc"/><stop offset="1" stop-color="#98a4ba"/></linearGradient>
<mask id="gmk"><g transform="translate(20 18.8)" fill="#fff"><circle r="11.4"/><path d="M-3.9 -10 L-2.6 -14.4 Q0 -15.2 2.6 -14.4 L3.9 -10Z" transform="rotate(0)"/><path d="M-3.9 -10 L-2.6 -14.4 Q0 -15.2 2.6 -14.4 L3.9 -10Z" transform="rotate(45)"/><path d="M-3.9 -10 L-2.6 -14.4 Q0 -15.2 2.6 -14.4 L3.9 -10Z" transform="rotate(90)"/><path d="M-3.9 -10 L-2.6 -14.4 Q0 -15.2 2.6 -14.4 L3.9 -10Z" transform="rotate(135)"/><path d="M-3.9 -10 L-2.6 -14.4 Q0 -15.2 2.6 -14.4 L3.9 -10Z" transform="rotate(180)"/><path d="M-3.9 -10 L-2.6 -14.4 Q0 -15.2 2.6 -14.4 L3.9 -10Z" transform="rotate(225)"/><path d="M-3.9 -10 L-2.6 -14.4 Q0 -15.2 2.6 -14.4 L3.9 -10Z" transform="rotate(270)"/><path d="M-3.9 -10 L-2.6 -14.4 Q0 -15.2 2.6 -14.4 L3.9 -10Z" transform="rotate(315)"/><circle r="5" fill="#000"/></g></mask>
</defs>
<g transform="translate(20 18.8)" fill="#4a5470" stroke="#4a5470" stroke-width="1.8" stroke-linejoin="round">
<circle r="11.4"/><path d="M-3.9 -10 L-2.6 -14.4 Q0 -15.2 2.6 -14.4 L3.9 -10Z" transform="rotate(0)"/><path d="M-3.9 -10 L-2.6 -14.4 Q0 -15.2 2.6 -14.4 L3.9 -10Z" transform="rotate(45)"/><path d="M-3.9 -10 L-2.6 -14.4 Q0 -15.2 2.6 -14.4 L3.9 -10Z" transform="rotate(90)"/><path d="M-3.9 -10 L-2.6 -14.4 Q0 -15.2 2.6 -14.4 L3.9 -10Z" transform="rotate(135)"/><path d="M-3.9 -10 L-2.6 -14.4 Q0 -15.2 2.6 -14.4 L3.9 -10Z" transform="rotate(180)"/><path d="M-3.9 -10 L-2.6 -14.4 Q0 -15.2 2.6 -14.4 L3.9 -10Z" transform="rotate(225)"/><path d="M-3.9 -10 L-2.6 -14.4 Q0 -15.2 2.6 -14.4 L3.9 -10Z" transform="rotate(270)"/><path d="M-3.9 -10 L-2.6 -14.4 Q0 -15.2 2.6 -14.4 L3.9 -10Z" transform="rotate(315)"/>
</g>
<rect x="0" y="0" width="40" height="38" fill="url(#gGe)" mask="url(#gmk)"/>
<circle cx="20" cy="18.8" r="5" fill="#d4d0c8" stroke="#4a5470" stroke-width="1.1"/>
</svg>
<!-- style dropdown -->
<div class="a" style="left:802px;top:37px;width:97px;height:21px;border-radius:3px;border-style:solid;border-width:1px;border-color:#7a7a7a #e8e8e8 #fff #7a7a7a;background:linear-gradient(#f6f6f6 0,#e4e4e4 3px,#cacaca 8px,#c4c4c4 100%)"></div>
<div class="a" style="left:804px;top:39px;width:93px;height:17px;border:1px dotted #000"></div>
<div class="lbl" style="left:806.5px;top:40.5px">Elegant</div>
<svg class="a" style="left:880px;top:40px" width="20" height="16" viewBox="0 0 20 16">
<path d="M6.5 2.5 H14 V6.8 H17 L10.2 13.6 L3 6.8 H6.5Z" fill="#505050" opacity="0.35" transform="translate(1 1)"/>
<path d="M5.5 1.6 H13 V6 H16.2 L9.5 12.8 L2.2 6 H5.5Z" fill="url(#gAr2)" stroke="#1a80d8" stroke-width="0.6"/>
<defs><linearGradient id="gAr2" x1="0" y1="0" x2="0" y2="1"><stop offset="0" stop-color="#90d8ff"/><stop offset="1" stop-color="#1088e8"/></linearGradient></defs>
</svg>
<!-- title icon -->
<svg class="a" style="left:0;top:0" width="24" height="24" viewBox="0 0 24 24">
<path d="M0 0H4V1H2V2H1V4H0Z" fill="#3a78b8"/>
<path d="M0 4 L3 2 V14 L8 23 H0Z" fill="#d8d8d8"/>
<path d="M3 14 L8 22.5" stroke="#a0a0a0" stroke-width="0.8"/>
<path d="M17.6 5.6 L16 9 L17.4 9 L15.8 12" fill="none" stroke="#000" stroke-width="2.6" stroke-linejoin="round"/>
<path d="M17.6 5.6 L16 9 L17.4 9 L15.8 12" fill="none" stroke="#f4f000" stroke-width="1.4" stroke-linejoin="round"/>
<circle cx="14" cy="13.6" r="3.4" fill="#000"/>
<circle cx="13.8" cy="13.4" r="2.6" fill="#20a020"/>
<path d="M11.5 15.5 L14.5 11.8" stroke="#c0c0c0" stroke-width="1.4"/>
<path d="M4.5 7.8 L12.6 6.6 L8.2 19.4" fill="none" stroke="#000" stroke-width="3" stroke-linejoin="round" opacity="0.6"/>
<path d="M4.5 7.8 L12.6 6.6 L8.2 19.4" fill="none" stroke="#f8f000" stroke-width="1.8" stroke-linejoin="round"/>
<rect x="5.4" y="19.2" width="6.4" height="1.6" fill="#b00000"/>
<rect x="6.4" y="18.2" width="3.6" height="1.2" fill="#e8e020"/>
</svg>
<!-- title buttons -->
<div class="a" style="left:967px;top:15px;width:7px;height:2px;background:#8ab4e6"></div>
<div class="a" style="left:985px;top:9px;width:8px;height:8px;border:1px solid #8ab4e6;border-top-width:2px"></div>
<svg class="a" style="left:1003px;top:8px" width="10" height="10" viewBox="0 0 10 10">
<path d="M1.5 1.5 L8.5 8.5 M8.5 1.5 L1.5 8.5" stroke="#9cc0ea" stroke-width="1.8"/>
</svg>
<!-- title right corner -->
<svg class="a" style="left:1004px;top:0" width="16" height="27" viewBox="0 0 16 27">
<path d="M13.5 0 H16 V23 H8 L13.5 15.5 V3 Q13.5 1 12 1 Z" fill="#dcdcdc"/>
<path d="M13.6 2.5 V15 Q13 18.5 8 22.6" fill="none" stroke="#202838" stroke-width="1"/>
<path d="M13 0 H16 V2.5 Q15 1 13 1Z" fill="#3a78b8"/>
<path d="M0 23.5 H8.5 L14 17" fill="none" stroke="#fff" stroke-width="1"/>
<rect x="14" y="17" width="1" height="6" fill="#fff"/>
</svg>
<!-- size grip -->
<svg class="a" style="left:1001px;top:807px" width="16" height="16" viewBox="0 0 16 16">
<g fill="#fff"><rect x="13" y="5" width="2" height="2"/><rect x="9" y="9" width="2" height="2"/><rect x="13" y="9" width="2" height="2"/><rect x="5" y="13" width="2" height="2"/><rect x="9" y="13" width="2" height="2"/><rect x="13" y="13" width="2" height="2"/></g>
<g fill="#8c8c8c"><rect x="12" y="4" width="2" height="2"/><rect x="8" y="8" width="2" height="2"/><rect x="12" y="8" width="2" height="2"/><rect x="4" y="12" width="2" height="2"/><rect x="8" y="12" width="2" height="2"/><rect x="12" y="12" width="2" height="2"/></g>
</svg>
<!-- ruler hourglass marker -->
<svg class="a" style="left:239px;top:63px" width="9" height="25" viewBox="0 0 9 25" shape-rendering="crispEdges">
<rect x="2" y="5" width="5" height="10" fill="#808080"/>
<path d="M0 2H9V3L4.5 7.5L0 3Z" fill="#d4d0c8"/>
<path d="M0 0H9V1H1V3H0Z" fill="#808080"/>
<rect x="8" y="0" width="1" height="3" fill="#808080"/>
<rect x="1" y="1" width="7" height="2" fill="#fff"/>
<path d="M0.5 2.8 L4.5 7.2" stroke="#fff" stroke-width="1.1" shape-rendering="auto"/>
<path d="M8.5 2.8 L4.5 7.2" stroke="#808080" stroke-width="1.1" shape-rendering="auto"/>
<path d="M0 15H9V14.5L4.5 9.5L0 14.5Z" fill="#d4d0c8"/>
<path d="M0.5 14.8 L4.5 10.2" stroke="#fff" stroke-width="1.1" shape-rendering="auto"/>
<path d="M8.5 14.8 L4.5 10.2" stroke="#808080" stroke-width="1.1" shape-rendering="auto"/>
<rect x="0" y="15" width="1" height="10" fill="#808080"/>
<rect x="8" y="15" width="1" height="10" fill="#808080"/>
<rect x="0" y="18" width="9" height="1" fill="#808080"/>
<rect x="0" y="24" width="9" height="1" fill="#808080"/>
<rect x="1" y="15" width="1" height="3" fill="#fff"/>
<rect x="1" y="19" width="7" height="5" fill="#d4d0c8"/>
<rect x="1" y="19" width="7" height="1" fill="#fff"/>
<rect x="1" y="19" width="1" height="5" fill="#fff"/>
<rect x="4" y="8" width="1" height="4" fill="#000"/>
</svg>
<!-- bottom-left corner -->
<svg class="a" style="left:0;top:818px" width="8" height="9" viewBox="0 0 8 9">
<path d="M0 3.5 Q1.5 3.5 2.5 5 L5 9 H0Z" fill="#3a74b4"/>
<path d="M1.5 3 L5.5 8.5" stroke="#fff" stroke-width="1"/>
<path d="M1 4.5 L4 9" stroke="#806a50" stroke-width="0.6" opacity="0.6"/>
</svg>
<!-- bottom-right corner -->
<svg class="a" style="left:1012px;top:818px" width="8" height="9" viewBox="0 0 8 9">
<path d="M8 3 L3 9 H8Z" fill="#d8d8d8"/>
<path d="M6.5 4 L2.5 8.5" stroke="#fff" stroke-width="1"/>
<path d="M8 4 L4 9" stroke="#909090" stroke-width="0.8"/>
<path d="M8 7 L6 9 H8Z" fill="#1a2a60"/>
</svg>
</body></html>
